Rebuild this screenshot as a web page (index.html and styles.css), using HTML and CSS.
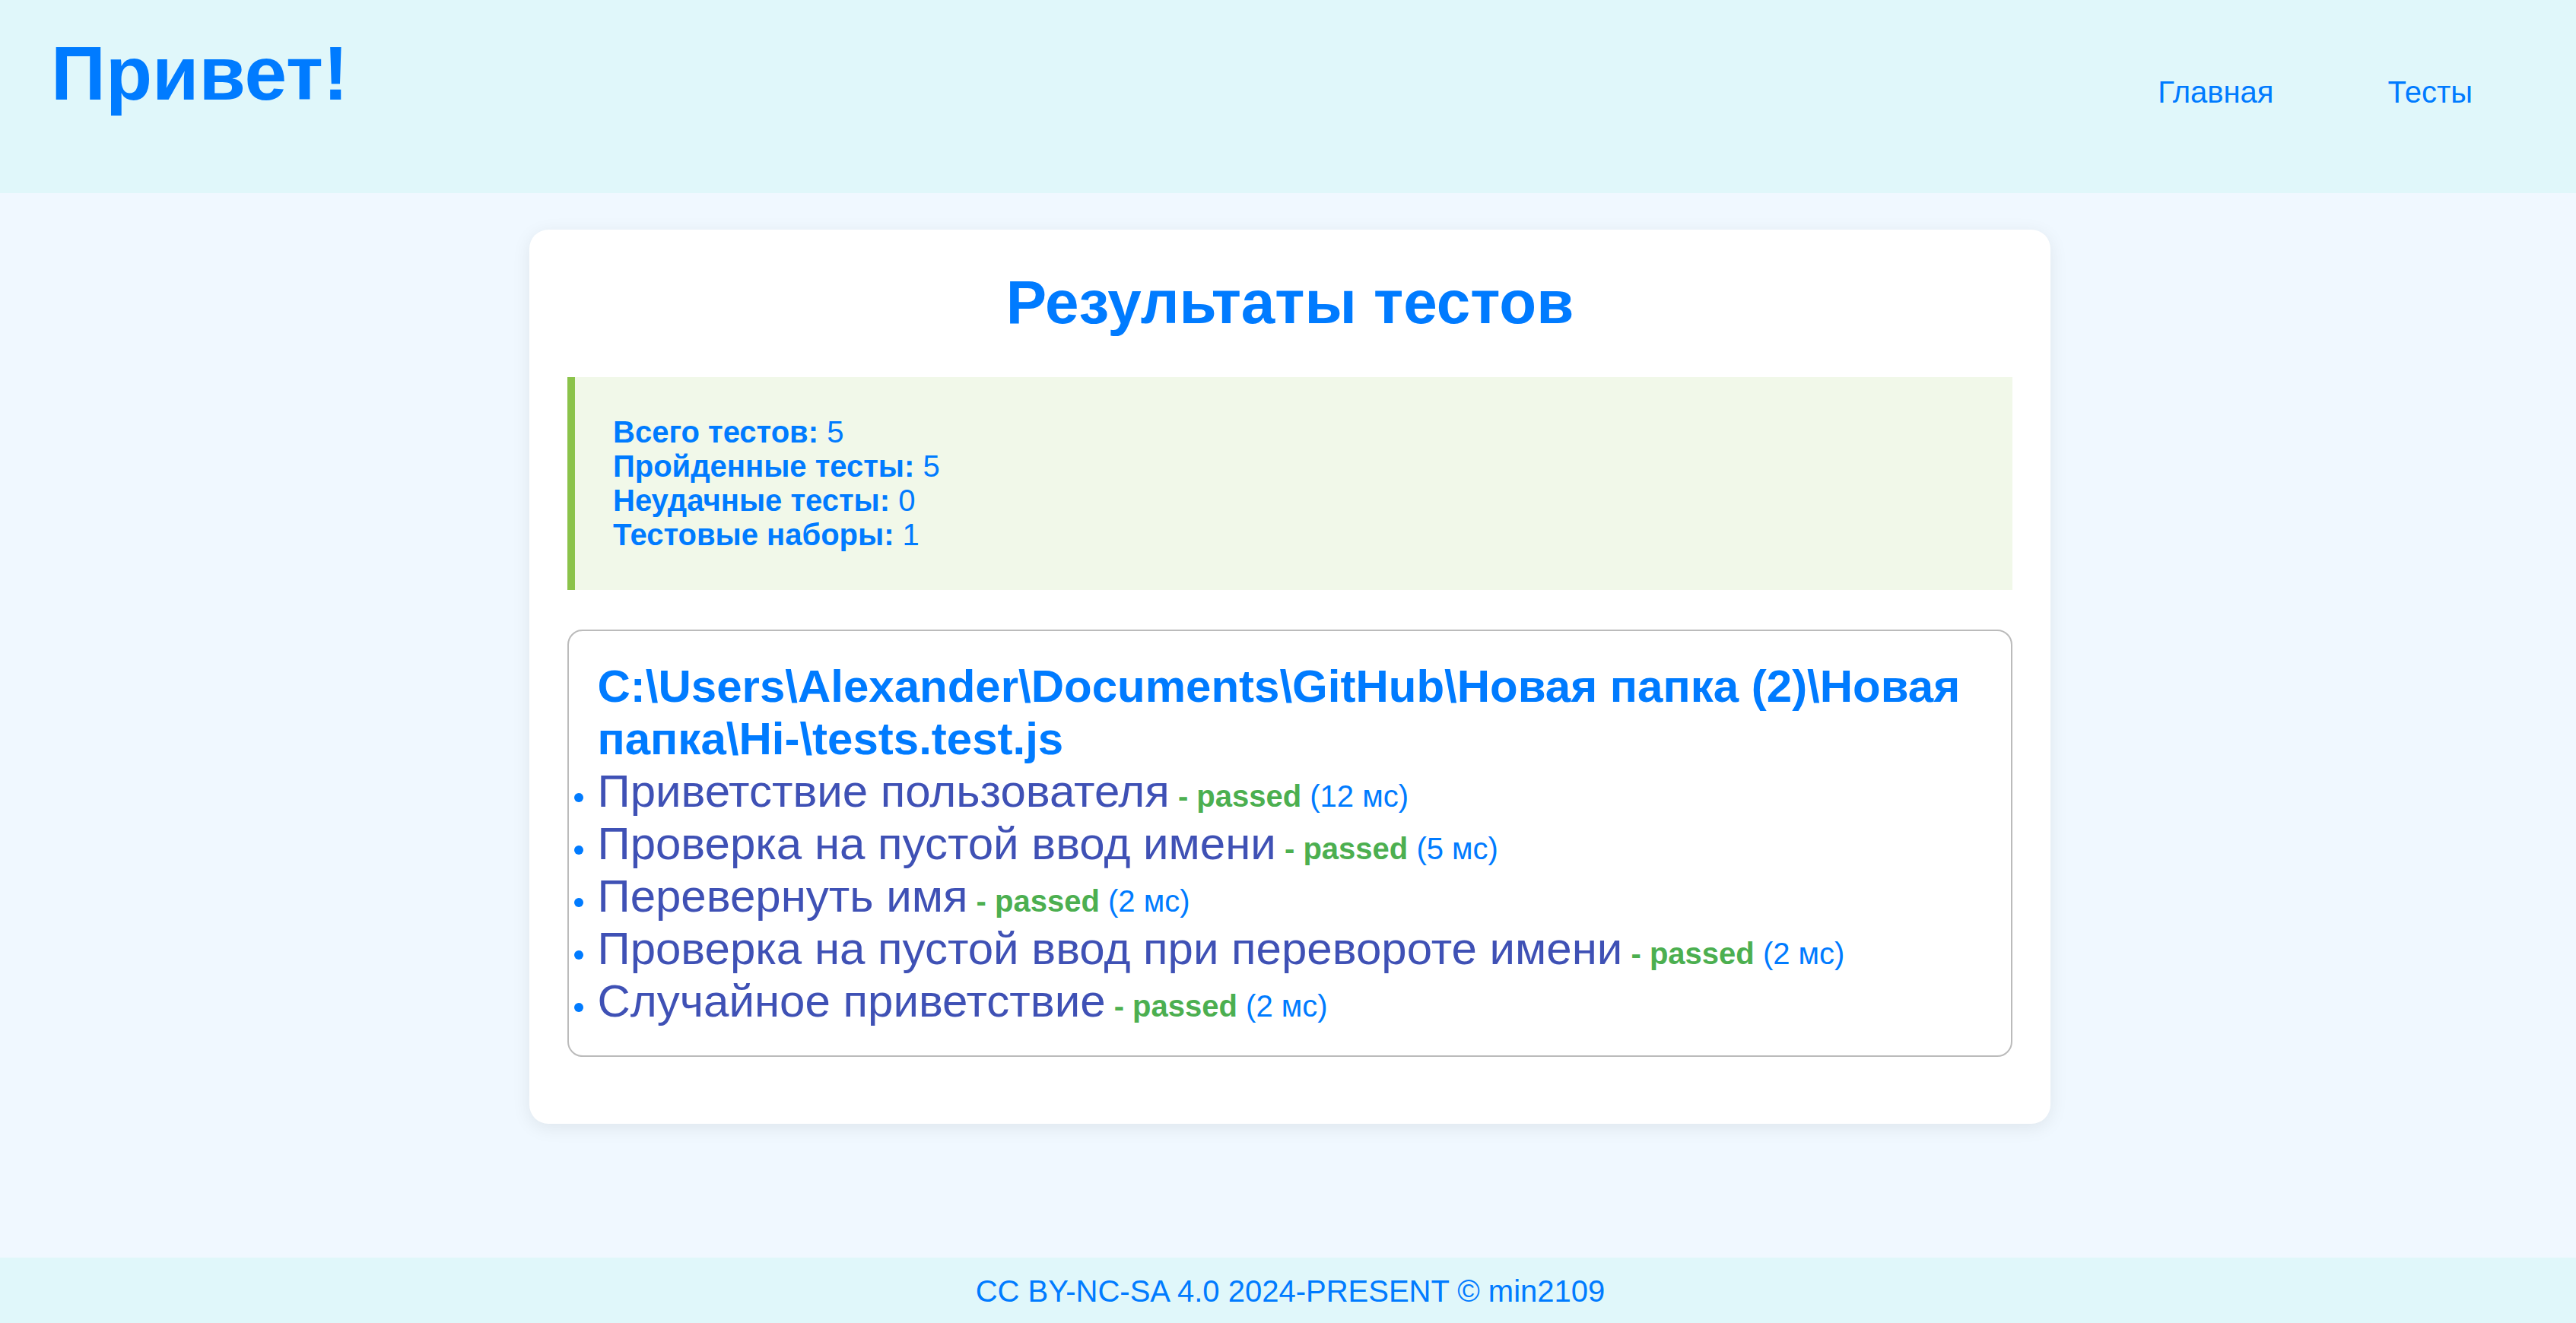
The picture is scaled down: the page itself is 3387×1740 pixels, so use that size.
FILE: index.html
```html
<!DOCTYPE html>
<html lang="ru">
<head>
<meta charset="utf-8">
<title>Результаты тестов</title>
<link rel="stylesheet" href="styles.css">
</head>
<body>
<header class="site-header">
  <h1 class="logo">Привет!</h1>
  <nav class="nav">
    <a class="nav-link" href="#">Главная</a>
    <a class="nav-link" href="#">Тесты</a>
  </nav>
</header>
<main class="main">
  <section class="card">
    <h2 class="card-title">Результаты тестов</h2>
    <div class="summary">
      <p class="stat"><strong>Всего тестов:</strong> 5</p>
      <p class="stat"><strong>Пройденные тесты:</strong> 5</p>
      <p class="stat"><strong>Неудачные тесты:</strong> 0</p>
      <p class="stat"><strong>Тестовые наборы:</strong> 1</p>
    </div>
    <div class="suite">
      <h3 class="suite-title">C:\Users\Alexander\Documents\GitHub\Новая папка (2)\Новая папка\Hi-\tests.test.js</h3>
      <ul class="tests">
        <li class="test"><span class="test-name">Приветствие пользователя</span> <span class="status">- passed</span> (12 мс)</li>
        <li class="test"><span class="test-name">Проверка на пустой ввод имени</span> <span class="status">- passed</span> (5 мс)</li>
        <li class="test"><span class="test-name">Перевернуть имя</span> <span class="status">- passed</span> (2 мс)</li>
        <li class="test"><span class="test-name">Проверка на пустой ввод при перевороте имени</span> <span class="status">- passed</span> (2 мс)</li>
        <li class="test"><span class="test-name">Случайное приветствие</span> <span class="status">- passed</span> (2 мс)</li>
      </ul>
    </div>
  </section>
</main>
<footer class="site-footer">CC BY-NC-SA 4.0 2024-PRESENT © min2109</footer>
</body>
</html>
```
FILE: styles.css
```css
html, body {
  margin: 0;
  padding: 0;
}
body {
  font-family: "Liberation Sans", Arial, sans-serif;
  background: #f0f8ff;
  color: #007bff;
  min-height: 100vh;
  display: flex;
  flex-direction: column;
}
.site-header {
  box-sizing: border-box;
  height: 254px;
  background: #e0f7fa;
  padding: 39px 136px 0 67px;
  display: flex;
  justify-content: space-between;
  align-items: flex-start;
}
.logo {
  margin: 0;
  font-size: 100px;
  font-weight: bold;
  color: #007bff;
  line-height: normal;
}
.nav {
  display: flex;
  gap: 150px;
  margin-top: 60px;
}
.nav-link {
  font-size: 40px;
  color: #007bff;
  text-decoration: none;
  line-height: normal;
}
.main {
  flex: 1;
  padding-left: 5px;
}
.card {
  box-sizing: border-box;
  width: 2000px;
  margin: 48px auto 0;
  padding: 50px;
  background: #fff;
  border-radius: 25px;
  box-shadow: 0 5px 25px rgba(0, 0, 0, 0.08);
}
.card-title {
  margin: 0 0 52px;
  text-align: center;
  font-size: 80px;
  font-weight: bold;
  color: #007bff;
  line-height: normal;
}
.summary {
  background: #f1f8e9;
  border-left: 10px solid #8bc34a;
  padding: 50px;
  margin-bottom: 52px;
}
.stat {
  margin: 0;
  font-size: 40px;
  line-height: normal;
  color: #007bff;
}
.suite {
  border: 2.5px solid #bbb;
  border-radius: 20px;
  padding: 37.5px;
  margin-bottom: 37.5px;
}
.suite-title {
  margin: 0;
  font-size: 60px;
  font-weight: bold;
  color: #007bff;
  line-height: normal;
}
.tests {
  margin: 0;
  padding: 0;
  list-style: disc outside;
}
.test {
  font-size: 40px;
  color: #007bff;
  line-height: normal;
}
.test-name {
  font-size: 60px;
  color: #3f51b5;
}
.status {
  font-weight: bold;
  color: #4caf50;
}
.site-footer {
  background: #e0f7fa;
  text-align: center;
  font-size: 40px;
  line-height: normal;
  color: #007bff;
  padding: 22px 0 19px 6px;
}
```
